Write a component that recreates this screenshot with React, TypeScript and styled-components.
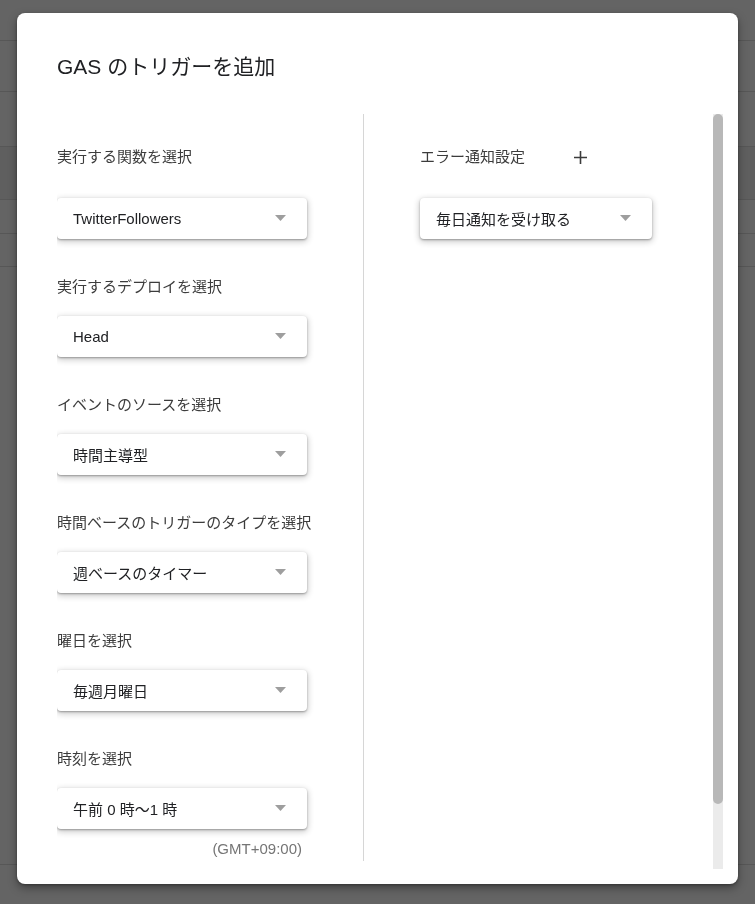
import React from 'react';
import styled, { createGlobalStyle } from 'styled-components';

const GlobalStyle = createGlobalStyle`
  html, body {
    margin: 0;
    padding: 0;
    height: 100%;
    background: #646464;
    font-family: "Liberation Sans", "Noto Sans CJK JP", sans-serif;
  }
  * {
    box-sizing: border-box;
  }
`;

const Page = styled.div`
  height: 904px;
  overflow: hidden;
  background: #646464;
`;

const PageRow = styled.div<{ $h: number; $dark?: boolean }>`
  height: ${(p) => p.$h}px;
  border-bottom: 1px solid #575757;
  background: ${(p) => (p.$dark ? '#5f5f5f' : '#646464')};
`;

const Dialog = styled.div`
  position: fixed;
  left: 17px;
  top: 13px;
  width: 721px;
  height: 871px;
  background: #fff;
  border-radius: 8px;
  box-shadow: 0 4px 10px rgba(0, 0, 0, 0.35), 0 1px 3px rgba(0, 0, 0, 0.3);
  padding: 40px 15px 15px 40px;
  display: flex;
  flex-direction: column;
`;

const Title = styled.h2`
  margin: 0 0 33px;
  font-size: 21px;
  line-height: 28px;
  font-weight: 400;
  color: #202124;
`;

const Body = styled.div`
  flex: 1;
  min-height: 0;
  display: flex;
`;

const Viewport = styled.div`
  flex: 1;
  overflow: hidden;
`;

const ScrollTrack = styled.div`
  width: 10px;
  background: #ebebeb;
  display: flex;
  flex-direction: column;
`;

const ScrollThumb = styled.div`
  height: 690px;
  background: #b8b8b8;
  border-radius: 5px;
`;

const Columns = styled.div`
  display: flex;
  align-items: flex-start;
  padding-bottom: 79px;
`;

const LeftColumn = styled.div`
  width: 307px;
  border-right: 1px solid #d6d6d6;
  padding: 23px 0 2px;
  display: flex;
  flex-direction: column;
  gap: 38px;
`;

const RightColumn = styled.div`
  padding: 23px 0 0 56px;
  display: flex;
  flex-direction: column;
`;

const Field = styled.div`
  display: flex;
  flex-direction: column;
`;

const FieldHeader = styled.div<{ $tall?: boolean }>`
  display: flex;
  align-items: center;
  height: ${(p) => (p.$tall ? 40 : 20)}px;
  margin-bottom: ${(p) => (p.$tall ? 21 : 19)}px;
`;

const Label = styled.span`
  font-size: 15px;
  line-height: 20px;
  color: #3c3c3c;
`;

const AddButton = styled.button`
  width: 40px;
  height: 40px;
  margin-left: 35px;
  border: none;
  background: none;
  padding: 0;
  display: flex;
  align-items: center;
  justify-content: center;
  cursor: pointer;
`;

const SelectBox = styled.div<{ $width: number }>`
  width: ${(p) => p.$width}px;
  height: 41px;
  background: #fff;
  border-radius: 4px;
  box-shadow: 0 1px 2px rgba(0, 0, 0, 0.3), 0 2px 6px 1px rgba(0, 0, 0, 0.2);
  display: flex;
  align-items: center;
  justify-content: space-between;
  padding: 0 21px 1px 16px;
`;

const SelectValue = styled.span`
  font-size: 15px;
  color: #202124;
  white-space: nowrap;
`;

const Note = styled.div`
  width: 250px;
  margin-top: 10px;
  padding-right: 5px;
  text-align: right;
  font-size: 15px;
  line-height: 20px;
  color: #757575;
`;

const Arrow = () => (
  <svg width="11" height="6" viewBox="0 0 11 6">
    <polygon points="0,0 11,0 5.5,6" fill="#9e9e9e" />
  </svg>
);

const PlusIcon = () => (
  <svg width="15" height="15" viewBox="0 0 15 15">
    <path d="M7.5 1v13M1 7.5h13" stroke="#3c3c3c" strokeWidth="1.6" fill="none" />
  </svg>
);

const Select: React.FC<{ value: string; width: number }> = ({ value, width }) => (
  <SelectBox $width={width}>
    <SelectValue>{value}</SelectValue>
    <Arrow />
  </SelectBox>
);

const fields = [
  { label: '実行する関数を選択', value: 'TwitterFollowers' },
  { label: '実行するデプロイを選択', value: 'Head' },
  { label: 'イベントのソースを選択', value: '時間主導型' },
  { label: '時間ベースのトリガーのタイプを選択', value: '週ベースのタイマー' },
  { label: '曜日を選択', value: '毎週月曜日' },
  { label: '時刻を選択', value: '午前 0 時〜1 時' },
];

const backgroundRows = [
  { h: 41 },
  { h: 51 },
  { h: 55 },
  { h: 53, dark: true },
  { h: 34 },
  { h: 33 },
  { h: 598 },
];

export default function App() {
  return (
    <>
      <GlobalStyle />
      <Page>
        {backgroundRows.map((r, i) => (
          <PageRow key={i} $h={r.h} $dark={r.dark} />
        ))}
      </Page>
      <Dialog>
        <Title>GAS のトリガーを追加</Title>
        <Body>
          <Viewport>
            <Columns>
              <LeftColumn>
                {fields.map((f, i) => (
                  <Field key={f.label}>
                    <FieldHeader $tall={i === 0}>
                      <Label>{f.label}</Label>
                    </FieldHeader>
                    <Select value={f.value} width={250} />
                    {i === fields.length - 1 && <Note>(GMT+09:00)</Note>}
                  </Field>
                ))}
              </LeftColumn>
              <RightColumn>
                <FieldHeader $tall>
                  <Label>エラー通知設定</Label>
                  <AddButton aria-label="追加">
                    <PlusIcon />
                  </AddButton>
                </FieldHeader>
                <Select value="毎日通知を受け取る" width={232} />
              </RightColumn>
            </Columns>
          </Viewport>
          <ScrollTrack>
            <ScrollThumb />
          </ScrollTrack>
        </Body>
      </Dialog>
    </>
  );
}
